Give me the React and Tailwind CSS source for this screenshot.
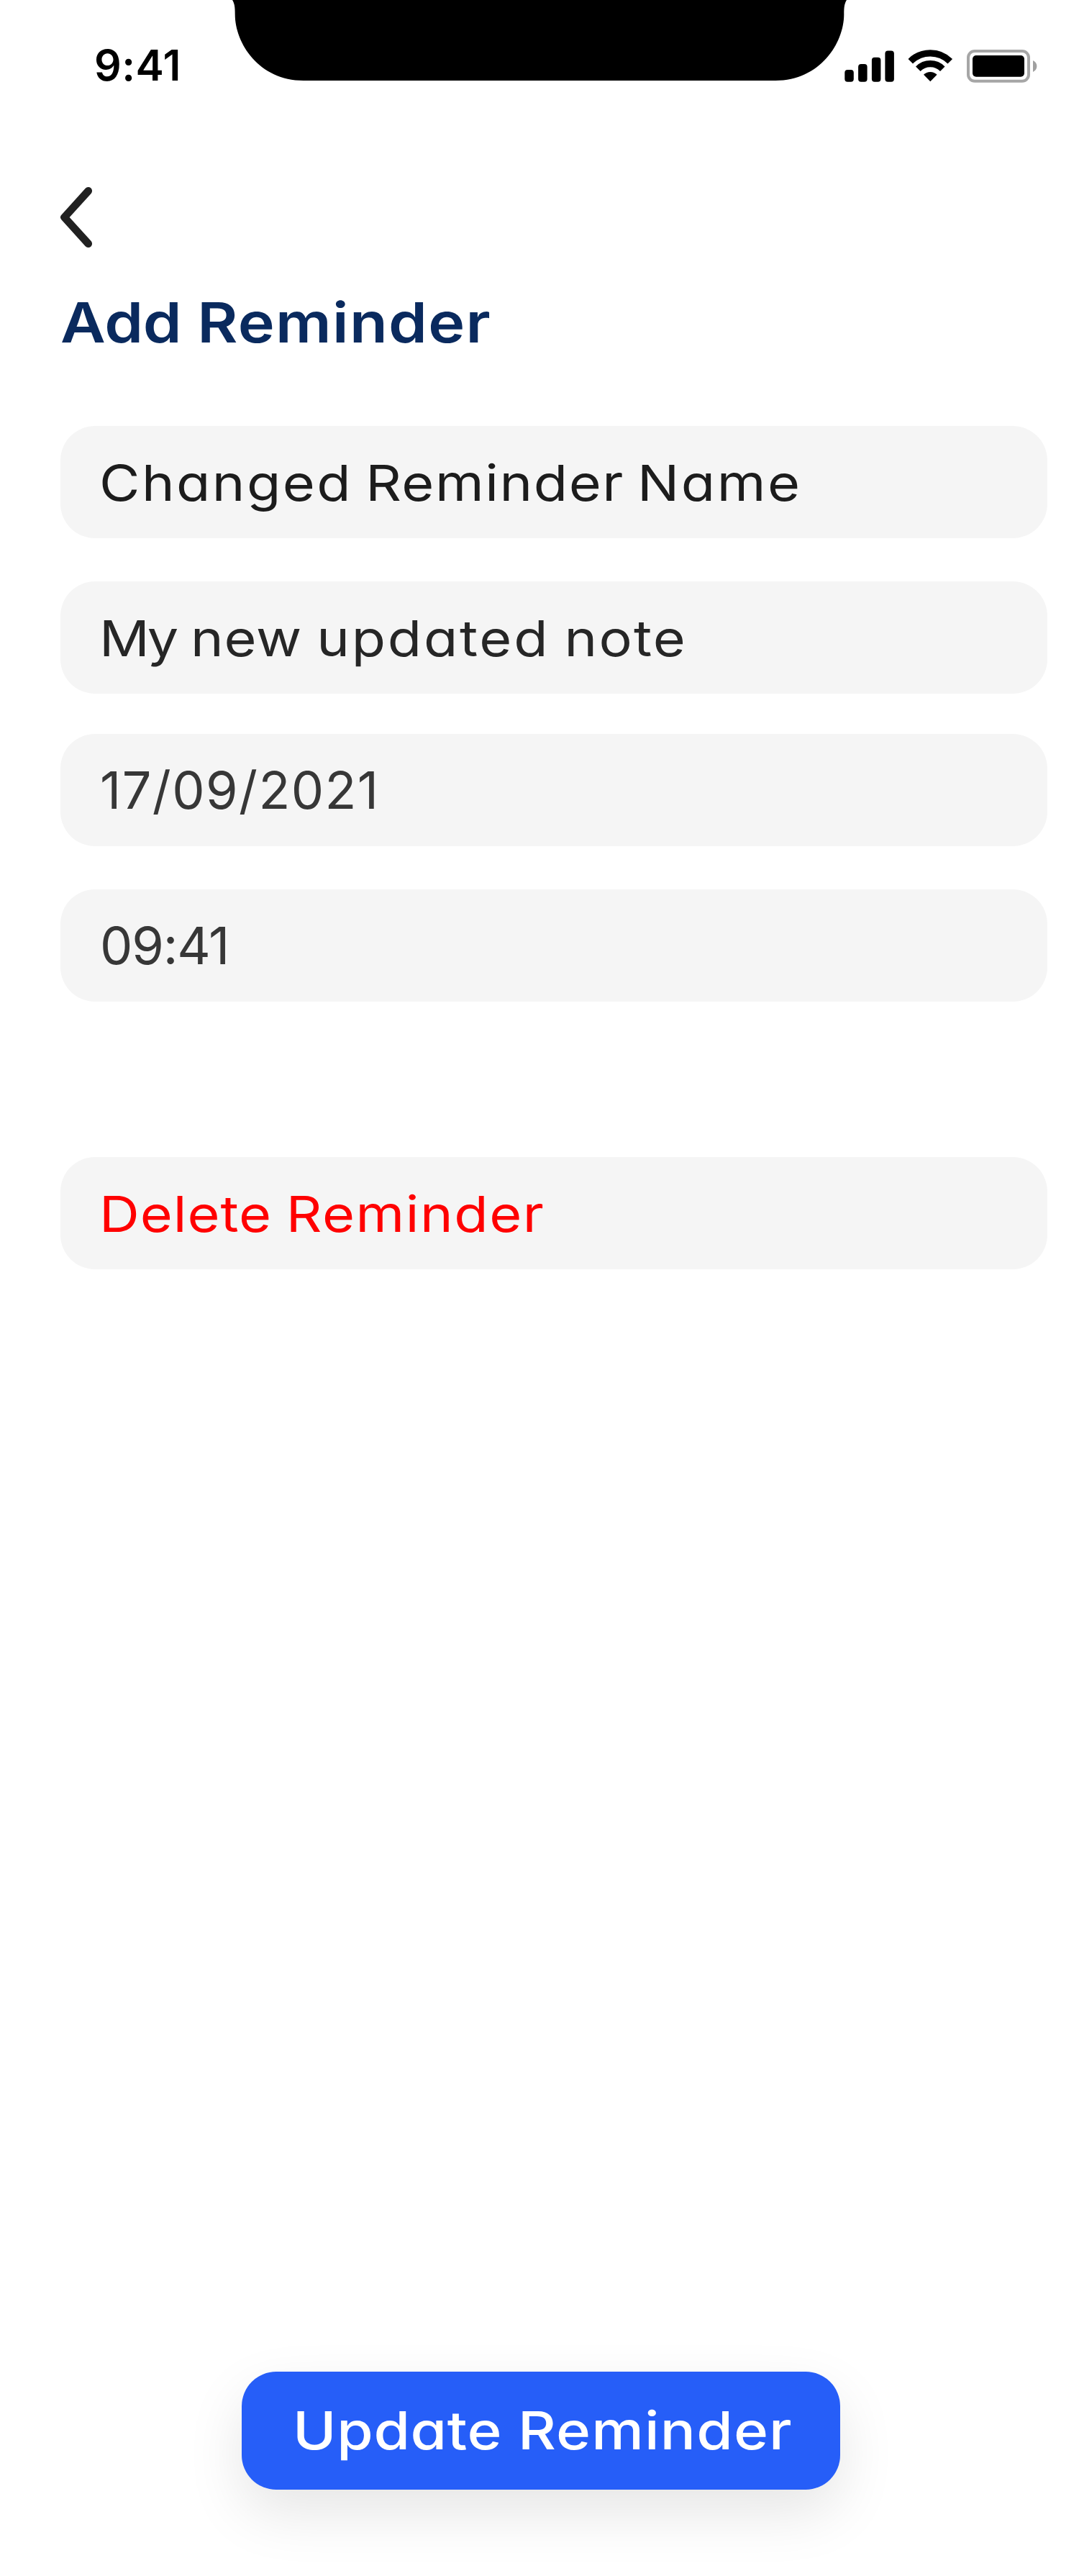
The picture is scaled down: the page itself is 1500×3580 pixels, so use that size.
import { Fragment } from "react";

function Notch() {
  return (
    <svg className="absolute left-0 top-0" width="1500" height="112" viewBox="0 0 1500 112">
      <path d="M323 0C326 5 326.7 9 326.7 20C326.7 60 360 112 422 112H1078C1140 112 1173.3 60 1173.3 20C1173.3 9 1174 5 1177 0Z" fill="#000" />
    </svg>
  );
}

function StatusIcons() {
  return (
    <svg className="h-12 w-[270px]" viewBox="1173 68 270 48" fill="#000">
      <rect x="1174.3" y="97" width="12.5" height="16.7" rx="4" />
      <rect x="1193.1" y="89" width="12.5" height="24.7" rx="4" />
      <rect x="1211.9" y="79.8" width="12.5" height="33.9" rx="4" />
      <rect x="1230.4" y="70.4" width="12.5" height="43.3" rx="4" />
      <path d="M1265.8 85.2A38.9 38.9 0 0 1 1320.8 85.2" fill="none" stroke="#000" strokeWidth="9.3" />
      <path d="M1276.3 95.7A24 24 0 0 1 1310.3 95.7" fill="none" stroke="#000" strokeWidth="9.2" />
      <path d="M1284 103.8A13.2 13.2 0 0 1 1302.6 103.8L1293.3 113.3Z" />
      <rect x="1346" y="71" width="84" height="41.7" rx="9" fill="none" stroke="#a6a6a6" strokeWidth="4" />
      <rect x="1352" y="77" width="72" height="29.7" rx="5" />
      <path d="M1436 84C1439.4 85.5 1441.4 88.6 1441.4 92S1439.4 98.5 1436 100Z" fill="#a0a0a0" />
    </svg>
  );
}

// A line of slightly widened text; each word carries its own tracking.
function WideText({ words, className = "" }) {
  return (
    <span className={`inline-block origin-left scale-x-[1.12] ${className}`}>
      {words.map(([text, tracking], i) => (
        <Fragment key={i}>
          {i > 0 && " "}
          <span className={tracking}>{text}</span>
        </Fragment>
      ))}
    </span>
  );
}

function Field({ children, className }) {
  return (
    <div className={`flex h-[156px] items-center rounded-[48px] bg-[#f5f5f5] pl-[54px] ${className}`}>
      {children}
    </div>
  );
}

export default function App() {
  return (
    <main className="relative flex h-[3580px] w-[1500px] flex-col overflow-hidden bg-white font-['Inter',sans-serif] [font-feature-settings:'cv11']">
      <Notch />
      <header className="flex h-[120px] items-start justify-between pl-[131px] pr-[57px]">
        <span className="mt-[61px] text-[59px] font-semibold leading-[60px] tracking-[0.5px]">9:41</span>
        <div className="mt-[68px]">
          <StatusIcons />
        </div>
      </header>

      <button className="ml-[84px] mt-[139px] h-[86px] w-[46px]" aria-label="Back">
        <svg width="46" height="86" viewBox="84 259 46 86" fill="none" stroke="#212121" strokeWidth="10.7" strokeLinecap="round" strokeLinejoin="round">
          <path d="M122.7 265.3L89.5 302L122.7 338.7" />
        </svg>
      </button>

      <h1 className="ml-[84px] mt-[63px] h-20 whitespace-nowrap text-[77px] font-semibold leading-[80px] text-[#0a2a5e]">
        <WideText words={[["Add", "tracking-[-0.2px]"], ["Reminder", "tracking-[1.2px]"]]} />
      </h1>

      <section className="ml-[84px] mt-[104px] w-[1372px] whitespace-nowrap text-[69px] leading-[84px]">
        <Field className="text-[#1c1c1c]">
          <WideText
            className="pt-0.5 [word-spacing:-3.3px]"
            words={[["Changed", "tracking-[2.2px]"], ["Reminder", "tracking-[1.4px]"], ["Name", "tracking-[2.3px]"]]}
          />
        </Field>
        <Field className="mt-[60px] text-[#262626]">
          <WideText
            className="pt-0.5 [word-spacing:-1.4px]"
            words={[["My", "tracking-[-3px]"], ["new", "tracking-[0.7px]"], ["updated", "tracking-[2.5px]"], ["note", "tracking-[2px]"]]}
          />
        </Field>
        <Field className="mt-14 text-[#373737]">
          <span className="ml-px text-[72px] tracking-[1.4px]">17/09/2021</span>
        </Field>
        <Field className="mt-[60px] text-[#373737]">
          <span className="ml-px text-[72px] tracking-[-1.2px]">09:41</span>
        </Field>
        <Field className="mt-[216px] text-[#ff0000]">
          <WideText
            className="pt-0.5 [word-spacing:-1.7px]"
            words={[["Delete", "tracking-[0.85px]"], ["Reminder", "tracking-[1.4px]"]]}
          />
        </Field>
      </section>

      <button className="mb-[120px] ml-[336px] mt-auto flex h-[164px] w-[832px] items-center whitespace-nowrap rounded-[48px] bg-[#265ef8] pl-[71px] text-[73px] font-medium text-white shadow-[0_32px_80px_rgba(0,0,0,0.1)]">
        <WideText words={[["Update", "tracking-[0.6px]"], ["Reminder", "tracking-[1.05px]"]]} />
      </button>
    </main>
  );
}
